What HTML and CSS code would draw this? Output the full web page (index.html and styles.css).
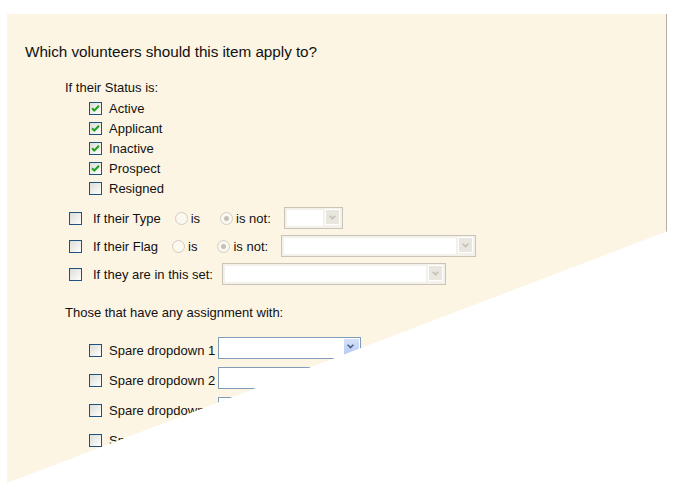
FILE: index.html
```html
<!DOCTYPE html>
<html lang="en">
<head>
    <meta charset="UTF-8">
    <title>Volunteer Filter</title>
    <link rel="stylesheet" href="styles.css">
</head>
<body>
    <div class="panel">
        <h1 class="title">Which volunteers should this item apply to?</h1>

        <div class="status">
            <div class="status-label">If their Status is:</div>
            <ul class="status-list">
                <li><span class="check checked"><svg viewBox="0 0 11 11"><path d="M2 5.2 L4.3 7.5 L9 2.8"/></svg></span>Active</li>
                <li><span class="check checked"><svg viewBox="0 0 11 11"><path d="M2 5.2 L4.3 7.5 L9 2.8"/></svg></span>Applicant</li>
                <li><span class="check checked"><svg viewBox="0 0 11 11"><path d="M2 5.2 L4.3 7.5 L9 2.8"/></svg></span>Inactive</li>
                <li><span class="check checked"><svg viewBox="0 0 11 11"><path d="M2 5.2 L4.3 7.5 L9 2.8"/></svg></span>Prospect</li>
                <li><span class="check"></span>Resigned</li>
            </ul>
        </div>

        <div class="filter-row first">
            <span class="check"></span>
            <span class="filter-label">If their Type</span>
            <span class="radio"></span><span class="radio-text">is</span>
            <span class="radio selected"></span><span class="radio-text last">is not:</span>
            <span class="select select-small"><span class="field"></span><span class="arrow"><svg viewBox="0 0 15 17"><path d="M4 7 L7.5 10.5 L11 7"/></svg></span></span>
        </div>
        <div class="filter-row">
            <span class="check"></span>
            <span class="filter-label">If their Flag</span>
            <span class="radio"></span><span class="radio-text">is</span>
            <span class="radio selected"></span><span class="radio-text last">is not:</span>
            <span class="select select-flag"><span class="field"></span><span class="arrow"><svg viewBox="0 0 15 17"><path d="M4 7 L7.5 10.5 L11 7"/></svg></span></span>
        </div>
        <div class="filter-row">
            <span class="check"></span>
            <span class="filter-label set-label">If they are in this set:</span>
            <span class="select select-set"><span class="field"></span><span class="arrow"><svg viewBox="0 0 15 17"><path d="M4 7 L7.5 10.5 L11 7"/></svg></span></span>
        </div>

        <div class="assign-label">Those that have any assignment with:</div>

        <div class="spare-list">
            <div class="spare-row">
                <span class="check"></span>
                <span class="spare-label">Spare dropdown 1</span>
                <span class="select select-spare"><span class="field"></span><span class="arrow"><svg viewBox="0 0 15 17"><path d="M4 7 L7.5 10.5 L11 7"/></svg></span></span>
            </div>
            <div class="spare-row">
                <span class="check"></span>
                <span class="spare-label">Spare dropdown 2</span>
                <span class="select select-spare"><span class="field"></span><span class="arrow"><svg viewBox="0 0 15 17"><path d="M4 7 L7.5 10.5 L11 7"/></svg></span></span>
            </div>
            <div class="spare-row">
                <span class="check"></span>
                <span class="spare-label">Spare dropdown 3</span>
                <span class="select select-spare"><span class="field"></span><span class="arrow"><svg viewBox="0 0 15 17"><path d="M4 7 L7.5 10.5 L11 7"/></svg></span></span>
            </div>
            <div class="spare-row">
                <span class="check"></span>
                <span class="spare-label">Spare dropdown 4</span>
                <span class="select select-spare"><span class="field"></span><span class="arrow"><svg viewBox="0 0 15 17"><path d="M4 7 L7.5 10.5 L11 7"/></svg></span></span>
            </div>
        </div>
    </div>
</body>
</html>
```

FILE: styles.css
```css
body {
    margin: 0;
    padding: 0;
    background: #fff;
    font-family: "Liberation Sans", Arial, sans-serif;
    font-size: 13px;
    color: #111;
}
.panel {
    margin: 14px 0 0 7px;
    width: 660px;
    height: 469px;
    padding: 28px 0 0 18px;
    box-sizing: border-box;
    background: #fdf5e4;
    border-right: 1px solid #b8b1a3;
    clip-path: polygon(0 0, 661px 0, 661px 217px, 0 469px);
}
.title {
    margin: 0;
    font-size: 15.3px;
    font-weight: normal;
    line-height: 20px;
    letter-spacing: -0.05px;
}

/* status checkboxes */
.status {
    margin: 16px 0 0 40px;
}
.status-label {
    line-height: 20px;
}
.status-list {
    list-style: none;
    margin: 0;
    padding: 0 0 0 24px;
}
.status-list li {
    display: flex;
    align-items: center;
    height: 20px;
}
.check {
    display: inline-block;
    flex: none;
    width: 11px;
    height: 11px;
    border: 1px solid #1c5180;
    background: linear-gradient(135deg, #dcdcd7 0%, #f4f4f1 70%, #fff 100%);
    margin-right: 7px;
}
.check svg {
    display: block;
    width: 11px;
    height: 11px;
}
.check svg path {
    fill: none;
    stroke: #21a121;
    stroke-width: 2;
}

/* type / flag / set rows */
.filter-row {
    display: flex;
    align-items: center;
    height: 22px;
    margin: 6px 0 0 44px;
}
.filter-row.first {
    margin-top: 9px;
}
.filter-row .check {
    margin-right: 11px;
}
.filter-label {
    margin-right: 14px;
}
.set-label {
    margin-right: 9px;
}
.radio {
    display: inline-block;
    box-sizing: border-box;
    width: 13px;
    height: 13px;
    border: 1px solid #d2cdc2;
    border-radius: 50%;
    background: #fbf8f0;
    margin-right: 3px;
    position: relative;
}
.radio.selected::after {
    content: "";
    position: absolute;
    left: 3px;
    top: 3px;
    width: 5px;
    height: 5px;
    border-radius: 50%;
    background: #c4c0b6;
}
.radio-text {
    margin-right: 20px;
}
.radio-text.last {
    margin-right: 13px;
}

/* fake select boxes */
.select {
    display: flex;
    box-sizing: border-box;
    height: 22px;
    border: 1px solid #c9c4b8;
    background: #f3f1ea;
    padding: 2px;
}
.select .field {
    flex: 1;
    background: #fff;
    margin-right: 2px;
}
.select .arrow {
    box-sizing: border-box;
    width: 15px;
    height: 16px;
    margin-top: -1px;
    border: 1px solid #fff;
    background: #e9e6df;
}
.select .arrow svg {
    display: block;
    width: 13px;
    height: 14px;
}
.select .arrow path {
    fill: none;
    stroke: #c3bfb5;
    stroke-width: 2;
}
.select-small {
    width: 59px;
}
.select-flag {
    width: 195px;
}
.select-set {
    width: 224px;
}

/* assignment section */
.assign-label {
    margin: 18px 0 0 40px;
    line-height: 20px;
}
.spare-list {
    margin: 14px 0 0 64px;
}
.spare-row {
    display: flex;
    align-items: flex-end;
    height: 22px;
    margin-bottom: 8px;
}
.spare-row .check {
    margin-bottom: 2px;
}
.spare-label {
    line-height: 16px;
    margin-right: 3px;
}
.select-spare {
    width: 143px;
    border-color: #7f9db9;
    background: #fff;
    padding: 1px;
}
.select-spare .arrow {
    margin-top: 0;
    height: 17px;
    border: none;
    background: linear-gradient(#d6e2fb, #b4c8f5);
}
.select-spare .arrow path {
    stroke: #4d6185;
}
```
